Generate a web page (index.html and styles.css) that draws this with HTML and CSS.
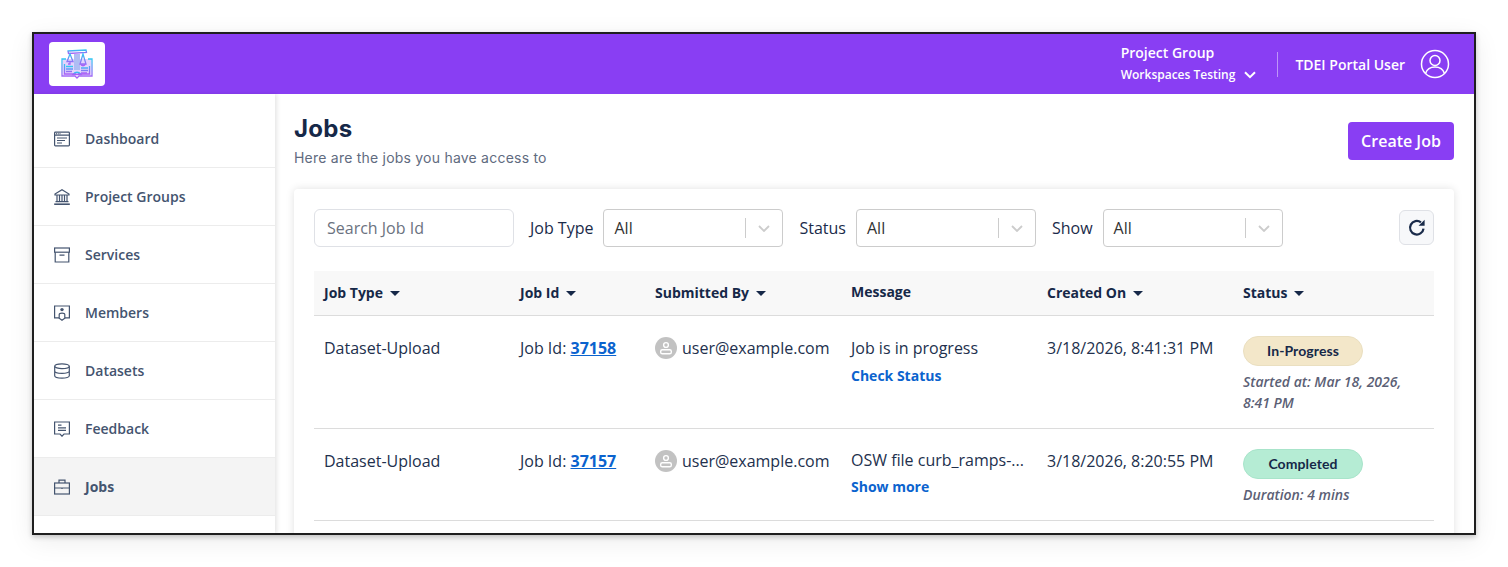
FILE: index.html
```html
<!DOCTYPE html>
<html lang="en">
<head>
    <meta charset="UTF-8">
    <meta name="viewport" content="width=device-width, initial-scale=1.0">
    <title>Jobs</title>
    <link rel="stylesheet" href="styles.css">
</head>
<body>
    <div class="window">
        <header class="topbar">
            <div class="logo">
                <svg width="32" height="30" viewBox="0 0 32 30" fill="none" stroke-width="1.3">
                    <defs>
                        <linearGradient id="logo-grad" x1="0" y1="0" x2="0" y2="1">
                            <stop offset="0" stop-color="#2fc8f2"/>
                            <stop offset="0.45" stop-color="#6a8ff5"/>
                            <stop offset="1" stop-color="#ab5ff6"/>
                        </linearGradient>
                    </defs>
                    <path d="M2 10 H30 V26 H2 Z" fill="#e3d4fc"/>
                    <rect x="13" y="5" width="6" height="16" fill="#aebdf3"/>
                    <g stroke="url(#logo-grad)">
                        <path d="M7 2 L25 1 L25.5 3.5 L7.5 4.5 Z"/>
                        <path d="M9 5 L6 12.5 H12 Z M9 12.5 V15 H7"/>
                        <path d="M22 5 L19 15 H25 Z M19.5 15 Q22 18.5 24.5 15"/>
                        <path d="M5 10 H1 V27 H14 L16 29 L18 27 H31 V10 H27"/>
                        <path d="M3.5 15 V25 H15 M28.5 17 V25 H17"/>
                        <path d="M5 17.5 H12 M5 20 H12 M5 22.5 H11 M20 19 H27 M20 21.5 H27 M20 24 H26"/>
                        <path d="M12 25.5 Q16 21 20 25.5 Z"/>
                    </g>
                </svg>
            </div>
            <div class="topbar-right">
                <div class="group-picker">
                    <div class="group-label">Project Group</div>
                    <div class="group-name">
                        Workspaces Testing
                        <svg width="12" height="8" viewBox="0 0 12 8" fill="none" stroke="#fff" stroke-width="2"><path d="M1 1.2 L6 6.2 L11 1.2"/></svg>
                    </div>
                </div>
                <div class="user-name">TDEI Portal User</div>
                <svg width="30" height="30" viewBox="0 0 30 30" fill="none" stroke="#fff" stroke-width="1.5">
                    <circle cx="15" cy="15" r="13.5"/>
                    <circle cx="15" cy="11.5" r="5"/>
                    <path d="M5.5 24.5 C7 20 10.5 18 15 18 C19.5 18 23 20 24.5 24.5"/>
                </svg>
            </div>
        </header>
        <div class="layout">
            <nav class="sidebar">
                <a class="nav-item">
                    <svg class="nav-icon" viewBox="0 0 16 16"><rect x="0.6" y="1.1" width="14.8" height="13.8" rx="0.8"/><path d="M0.6 4.2 H15.4 M2 2.7 H2.8 M3.8 2.7 H4.6 M5.6 2.7 H6.4 M3 7 H13 M3 9.5 H11 M3 12 H8"/></svg>
                    Dashboard
                </a>
                <a class="nav-item">
                    <svg class="nav-icon" viewBox="0 0 16 16"><path d="M1 5 L8 0.8 L15 5 V6 H1 Z M3 6.5 V12.2 M5.5 6.5 V12.2 M8 6.5 V12.2 M10.5 6.5 V12.2 M13 6.5 V12.2 M1.5 12.6 H14.5"/><path d="M0.2 15.2 H15.8" stroke-width="1.6"/></svg>
                    Project Groups
                </a>
                <a class="nav-item">
                    <svg class="nav-icon" viewBox="0 0 16 16"><rect x="0.6" y="1" width="14.8" height="4.2"/><path d="M1.2 5.2 V15 H14.8 V5.2 M5.5 8.2 H10.5"/></svg>
                    Services
                </a>
                <a class="nav-item">
                    <svg class="nav-icon" viewBox="0 0 16 16"><path d="M5 12.8 H0.6 V1 H15.4 V12.8 H11"/><path d="M5.2 9.6 C5.2 7.6 10.8 7.6 10.8 9.6 V13.2 L8 15.2 L5.2 13.2 Z"/><circle cx="8" cy="4.6" r="1.7" class="icon-fill"/></svg>
                    Members
                </a>
                <a class="nav-item">
                    <svg class="nav-icon" viewBox="0 0 16 16"><ellipse cx="8" cy="3.2" rx="7.3" ry="2.4"/><path d="M0.7 3.2 V12.8 C0.7 14.2 4 15.2 8 15.2 C12 15.2 15.3 14.2 15.3 12.8 V3.2 M0.7 8 C0.7 9.4 4 10.4 8 10.4 C12 10.4 15.3 9.4 15.3 8"/></svg>
                    Datasets
                </a>
                <a class="nav-item">
                    <svg class="nav-icon" viewBox="0 0 16 16"><path d="M6 13 H0.6 V1 H15.4 V13 H10 L8 15.2 Z M4 4.2 H7.5 M4 6.8 H12 M4 9.4 H12"/></svg>
                    Feedback
                </a>
                <a class="nav-item active">
                    <svg class="nav-icon" viewBox="0 0 16 16"><rect x="0.6" y="4" width="14.8" height="11"/><path d="M5 4 V1.2 H11 V4 M0.6 9 H15.4 M8 8.4 V10"/></svg>
                    Jobs
                </a>
            </nav>
            <main class="content">
                <div class="page-head">
                    <div>
                        <h1>Jobs</h1>
                        <p class="subtitle">Here are the jobs you have access to</p>
                    </div>
                    <button class="btn-create">Create Job</button>
                </div>
                <section class="card">
                    <div class="filters">
                        <input class="search" type="text" placeholder="Search Job Id">
                        <label class="filter-label">Job Type</label>
                        <div class="select">
                            <span>All</span>
                            <svg class="select-arrow" width="12" height="7" viewBox="0 0 12 7" fill="none" stroke="#cccccc" stroke-width="1.8"><path d="M1 1 L6 6 L11 1"/></svg>
                        </div>
                        <label class="filter-label">Status</label>
                        <div class="select">
                            <span>All</span>
                            <svg class="select-arrow" width="12" height="7" viewBox="0 0 12 7" fill="none" stroke="#cccccc" stroke-width="1.8"><path d="M1 1 L6 6 L11 1"/></svg>
                        </div>
                        <label class="filter-label">Show</label>
                        <div class="select">
                            <span>All</span>
                            <svg class="select-arrow" width="12" height="7" viewBox="0 0 12 7" fill="none" stroke="#cccccc" stroke-width="1.8"><path d="M1 1 L6 6 L11 1"/></svg>
                        </div>
                        <button class="btn-refresh" aria-label="Refresh">
                            <svg width="18" height="18" viewBox="0 0 16 16" fill="none" stroke="#1a2b4a" stroke-width="2"><path d="M13.8 8.5 A6 6 0 1 1 11.5 3"/><path d="M9.4 6 H14.8 V0.6 Z" fill="#1a2b4a" stroke="none"/></svg>
                        </button>
                    </div>
                    <table class="jobs">
                        <colgroup>
                            <col class="col-type"><col class="col-id"><col class="col-by"><col class="col-msg"><col class="col-date"><col class="col-status">
                        </colgroup>
                        <thead>
                            <tr>
                                <th>Job Type <i class="caret"></i></th>
                                <th>Job Id <i class="caret"></i></th>
                                <th>Submitted By <i class="caret"></i></th>
                                <th class="th-plain">Message</th>
                                <th>Created On <i class="caret"></i></th>
                                <th>Status <i class="caret"></i></th>
                            </tr>
                        </thead>
                        <tbody>
                            <tr>
                                <td>Dataset-Upload</td>
                                <td>Job Id: <a class="job-link">37158</a></td>
                                <td>
                                    <div class="submitter">
                                        <svg width="22" height="22" viewBox="0 0 22 22"><circle cx="11" cy="11" r="11" fill="#c2c2c2"/><circle cx="11" cy="8" r="2.4" fill="none" stroke="#fff" stroke-width="1.4"/><rect x="5.7" y="12.7" width="10.6" height="4.1" rx="1.6" fill="none" stroke="#fff" stroke-width="1.4"/></svg>
                                        user@example.com
                                    </div>
                                </td>
                                <td>
                                    <div class="msg">Job is in progress</div>
                                    <a class="msg-link">Check Status</a>
                                </td>
                                <td>3/18/2026, 8:41:31 PM</td>
                                <td>
                                    <span class="pill pill-progress">In-Progress</span>
                                    <div class="status-note">Started at: Mar 18, 2026, 8:41 PM</div>
                                </td>
                            </tr>
                            <tr>
                                <td>Dataset-Upload</td>
                                <td>Job Id: <a class="job-link">37157</a></td>
                                <td>
                                    <div class="submitter">
                                        <svg width="22" height="22" viewBox="0 0 22 22"><circle cx="11" cy="11" r="11" fill="#c2c2c2"/><circle cx="11" cy="8" r="2.4" fill="none" stroke="#fff" stroke-width="1.4"/><rect x="5.7" y="12.7" width="10.6" height="4.1" rx="1.6" fill="none" stroke="#fff" stroke-width="1.4"/></svg>
                                        user@example.com
                                    </div>
                                </td>
                                <td>
                                    <div class="msg msg-clip">OSW file curb_ramps-...</div>
                                    <a class="msg-link">Show more</a>
                                </td>
                                <td>3/18/2026, 8:20:55 PM</td>
                                <td>
                                    <span class="pill pill-done">Completed</span>
                                    <div class="status-note">Duration: 4 mins</div>
                                </td>
                            </tr>
                        </tbody>
                    </table>
                </section>
            </main>
        </div>
    </div>
</body>
</html>
```

FILE: styles.css
```css
html, body {
    height: 567px;
    overflow: hidden;
}
body {
    margin: 0;
    padding: 32px;
    box-sizing: border-box;
    background-color: #fff;
    font-family: "Open Sans", sans-serif;
    color: #1a2b4a;
}
.window {
    height: 503px;
    border: 2px solid #1f1f1f;
    box-sizing: border-box;
    overflow: hidden;
    box-shadow: 0 2px 5px rgba(0,0,0,0.2), 0 6px 24px rgba(0,0,0,0.08);
    background: #fff;
}
.topbar {
    height: 60px;
    background-color: #893ef3;
    display: flex;
    align-items: center;
    justify-content: space-between;
    padding: 0 24px 0 15px;
    color: #fff;
}
.logo {
    width: 56px;
    height: 44px;
    background: #fff;
    border-radius: 4px;
    display: flex;
    align-items: center;
    justify-content: center;
}
.topbar-right {
    display: flex;
    align-items: center;
}
.group-picker {
    padding-right: 21px;
    border-right: 1px solid rgba(255,255,255,0.45);
    height: 25px;
    display: flex;
    flex-direction: column;
    justify-content: center;
}
.group-label {
    font-size: 14px;
    font-weight: 600;
    line-height: 19px;
    margin-bottom: 4px;
    margin-top: -2px;
}
.group-name {
    font-size: 12px;
    font-weight: 600;
    line-height: 18px;
    display: flex;
    align-items: center;
    gap: 9px;
}
.user-name {
    font-size: 14px;
    font-weight: 600;
    margin: 0 15px 0 17px;
}
.layout {
    display: flex;
    height: 439px;
}
.sidebar {
    width: 241px;
    flex-shrink: 0;
    padding-top: 16px;
    box-sizing: border-box;
    box-shadow: 2px 0 4px rgba(0,0,0,0.1);
}
.nav-item {
    height: 58px;
    box-sizing: border-box;
    display: flex;
    align-items: center;
    gap: 15px;
    padding-left: 20px;
    border-bottom: 1px solid #ececec;
    font-size: 14px;
    font-weight: 600;
    color: #44546f;
}
.nav-item.active {
    background-color: #f4f4f4;
    font-weight: 700;
}
.nav-icon {
    width: 16px;
    height: 16px;
    fill: none;
    stroke: #44546f;
    stroke-width: 1.2;
    flex-shrink: 0;
}
.nav-icon .icon-fill {
    fill: #44546f;
    stroke: none;
}
.content {
    flex: 1;
    padding: 20px 20px 0 19px;
    min-width: 0;
}
.page-head {
    display: flex;
    justify-content: space-between;
    align-items: flex-start;
    height: 46px;
    margin-bottom: 29px;
}
h1 {
    font-family: "Inter", sans-serif;
    font-size: 24px;
    font-weight: 700;
    letter-spacing: 0.3px;
    line-height: 30px;
    margin: 0 0 5px;
    color: #162848;
}
.subtitle {
    font-family: "Inter", sans-serif;
    font-size: 14px;
    letter-spacing: 0.22px;
    line-height: 17px;
    margin: 0;
    color: #5f6b80;
}
.btn-create {
    width: 106px;
    height: 38px;
    border: none;
    border-radius: 4px;
    background-color: #893ef3;
    color: #fff;
    font-family: inherit;
    font-size: 16px;
    font-weight: 600;
    margin-top: 8px;
}
.card {
    padding: 20px;
    height: 400px;
    background: #fff;
    border-radius: 4px;
    box-shadow: 0 0 8px rgba(0,0,0,0.12);
}
.filters {
    display: flex;
    align-items: center;
    height: 38px;
    margin-bottom: 24px;
}
.search {
    width: 200px;
    height: 38px;
    box-sizing: border-box;
    border: 1px solid #dfe1e6;
    border-radius: 6px;
    padding: 0 12px;
    font-family: inherit;
    font-size: 16px;
    margin-right: 16px;
}
.search::placeholder {
    color: #6b7280;
    opacity: 1;
}
.filter-label {
    font-size: 16px;
    margin-right: 10px;
}
.select {
    width: 180px;
    height: 38px;
    box-sizing: border-box;
    border: 1px solid #cccccc;
    border-radius: 4px;
    display: flex;
    align-items: center;
    justify-content: space-between;
    padding: 0 12px 0 10px;
    margin-right: 16px;
    font-size: 16px;
    color: #333;
}
.select-arrow {
    padding-left: 12px;
    height: 7px;
    box-sizing: content-box;
}
.select span {
    flex: 1;
    height: 20px;
    line-height: 20px;
    border-right: 1px solid #cccccc;
}
.btn-refresh {
    width: 35px;
    height: 35px;
    margin-left: auto;
    align-self: flex-start;
    margin-top: 1px;
    border: 1px solid #dfe1e6;
    border-radius: 6px;
    background-color: #f7f8fa;
    display: flex;
    align-items: center;
    justify-content: center;
    padding: 0;
}
.jobs {
    width: 1120px;
    table-layout: fixed;
    border-collapse: collapse;
}
.col-type { width: 196px; }
.col-id { width: 135px; }
.col-by { width: 196px; }
.col-msg { width: 196px; }
.col-date { width: 196px; }
.col-status { width: 201px; }
.jobs th {
    height: 44px;
    box-sizing: border-box;
    background-color: #f8f8f8;
    border-bottom: 1px solid #dcdcdc;
    padding: 0 10px;
    text-align: left;
    font-size: 14px;
    font-weight: 700;
    color: #162848;
}
.jobs th.th-plain {
    padding-bottom: 2px;
}
.caret {
    display: inline-block;
    width: 0;
    height: 0;
    border-left: 5px solid transparent;
    border-right: 5px solid transparent;
    border-top: 5px solid #162848;
    margin-left: 3px;
    vertical-align: 2px;
}
.jobs td {
    padding: 20px 10px 15px;
    border-bottom: 1px solid #dcdcdc;
    vertical-align: top;
    font-size: 16px;
    line-height: 24px;
    color: #22304d;
}
.job-link {
    color: #0b63ce;
    font-weight: 700;
    text-decoration: underline;
}
.submitter {
    display: flex;
    align-items: center;
    gap: 5px;
    white-space: nowrap;
}
.msg {
    white-space: nowrap;
}
.msg-clip {
    margin-top: -1px;
    height: 23px;
}
.msg-link {
    display: block;
    margin-top: 6px;
    color: #0b63ce;
    font-size: 14px;
    font-weight: 700;
    line-height: 20px;
}
.pill {
    display: block;
    width: 120px;
    height: 30px;
    box-sizing: border-box;
    border-radius: 15px;
    text-align: center;
    font-family: "Lato", sans-serif;
    font-size: 14px;
    font-weight: 700;
    letter-spacing: 0.1px;
    line-height: 28px;
    color: #162848;
}
.pill-progress {
    background-color: #f3e7c9;
    border: 1px solid #eadfc0;
}
.pill-done {
    background-color: #b5ecd4;
    border: 1px solid #a8e4ca;
}
.status-note {
    margin-top: 5px;
    font-size: 14px;
    font-weight: 600;
    font-style: italic;
    line-height: 21px;
    color: #5b6075;
}
```
